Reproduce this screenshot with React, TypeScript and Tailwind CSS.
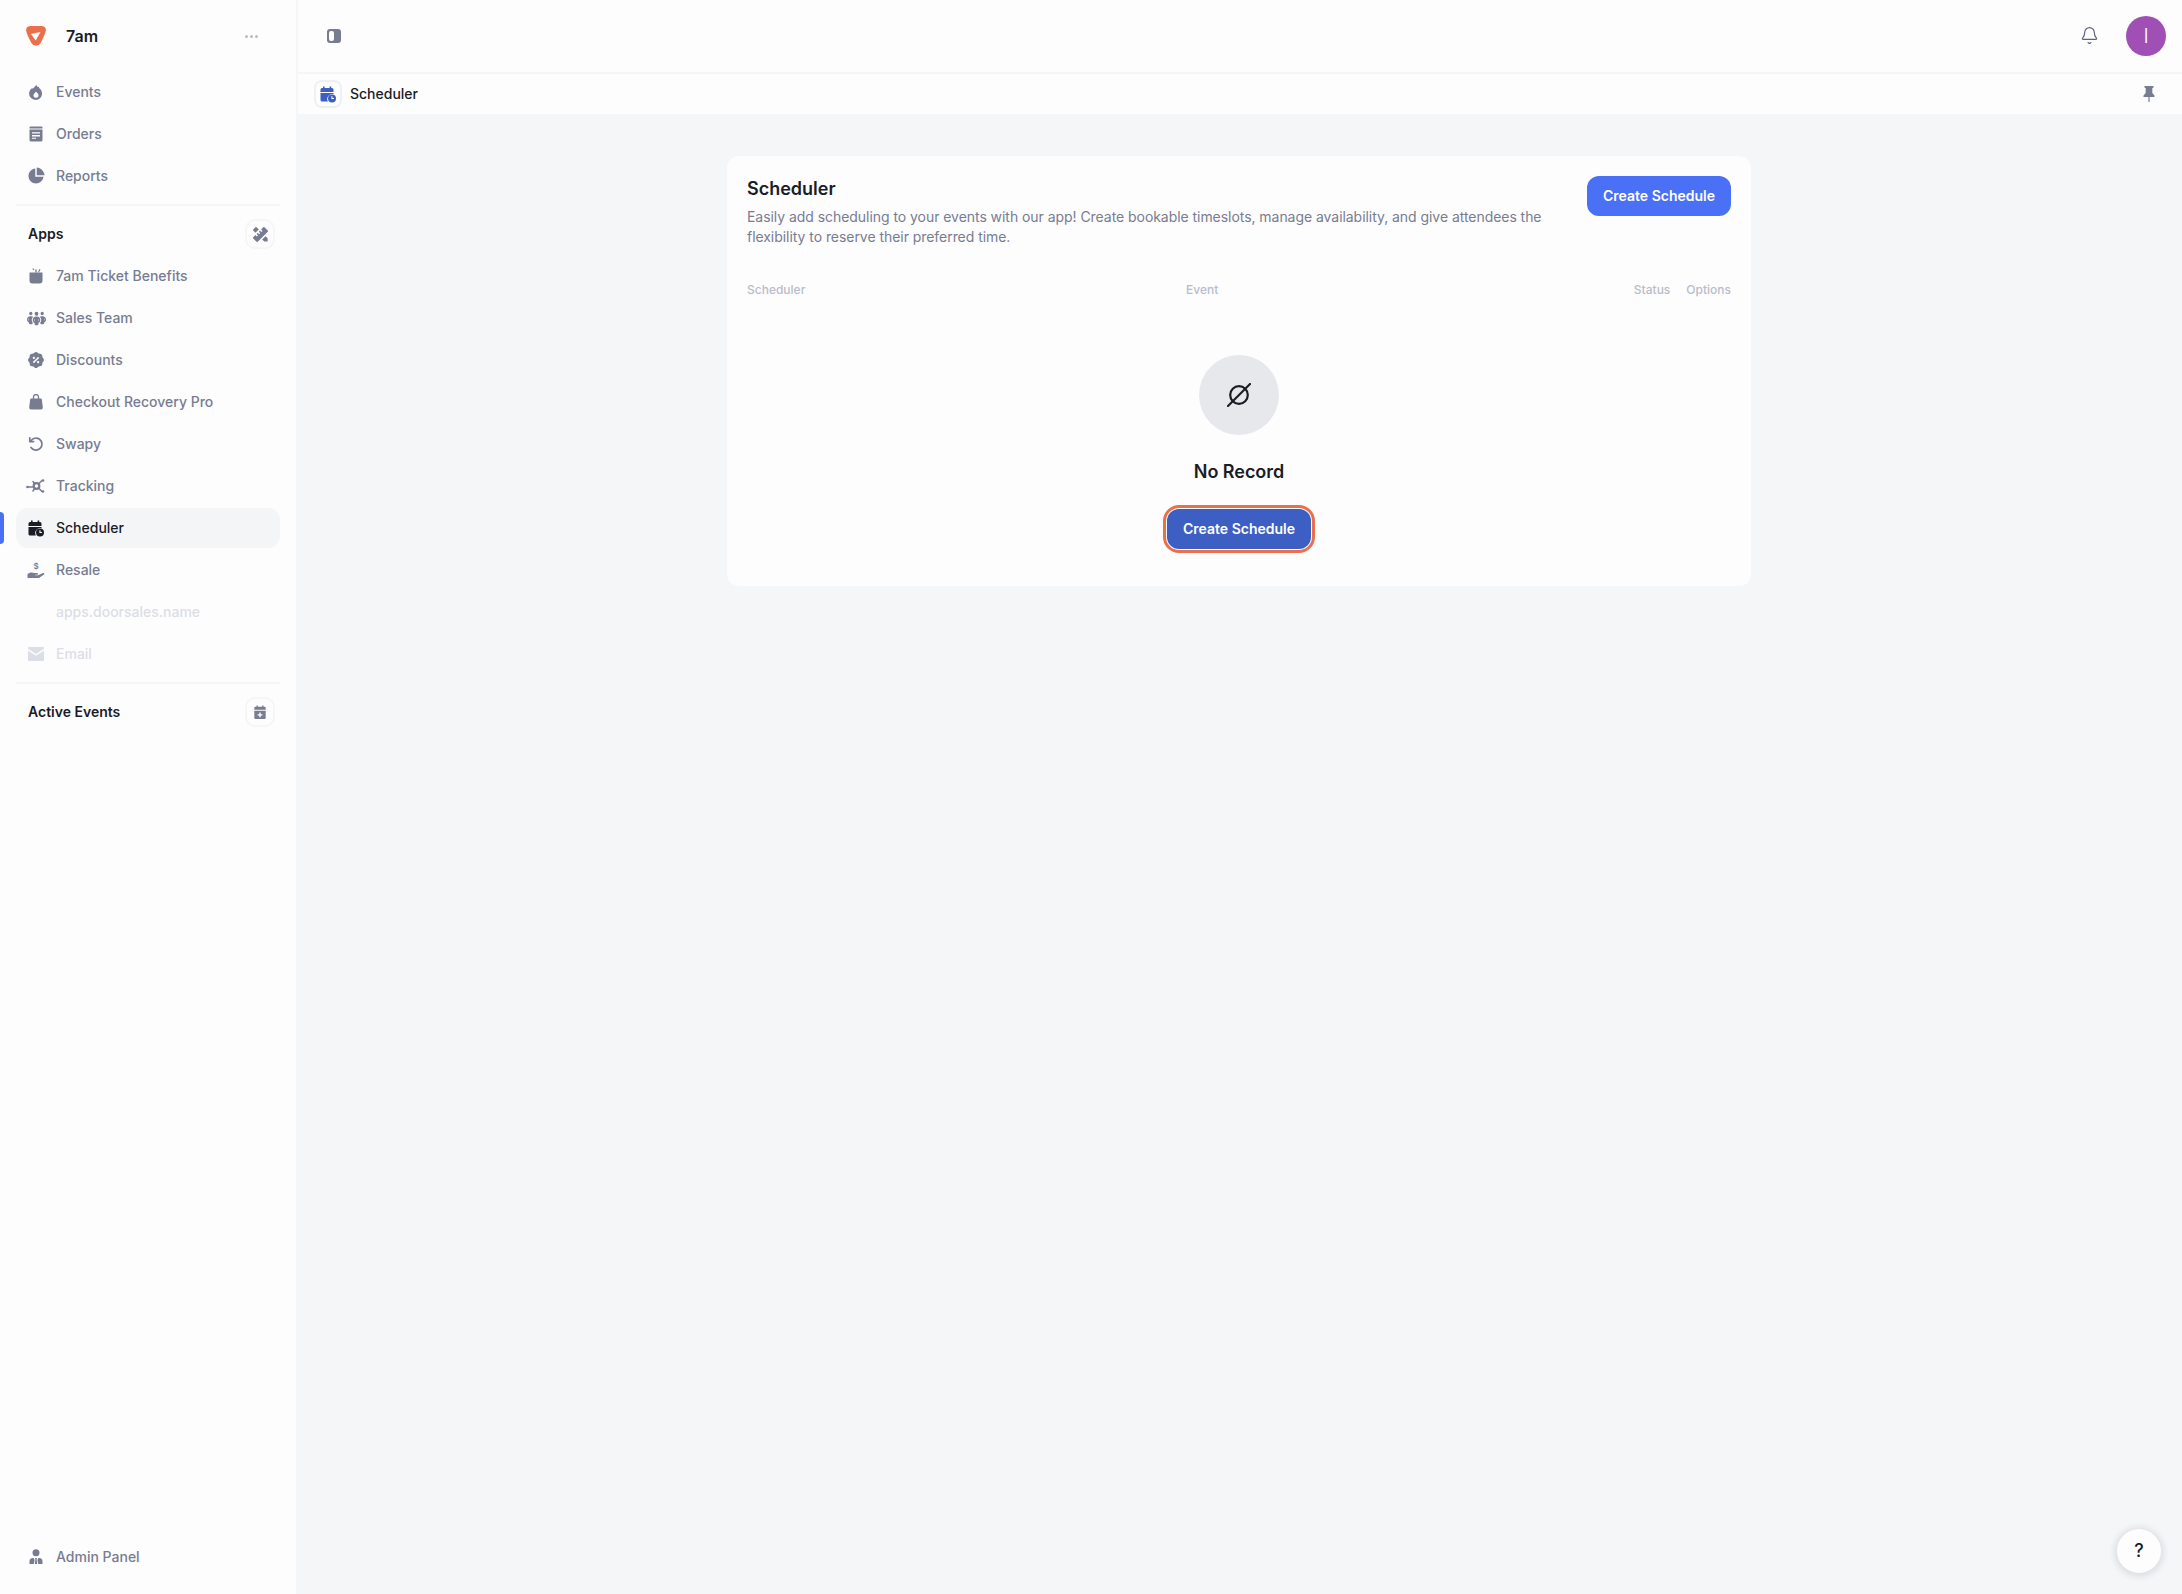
import type { ReactNode } from "react"
import { Bell } from "lucide-react"
import { RiDiscountPercentFill, RiPencilRuler2Fill, RiPieChart2Fill } from "react-icons/ri"
import { FaPeopleGroup } from "react-icons/fa6"

const font = { fontFamily: "Inter, 'Liberation Sans', sans-serif" }

function FlameIcon() {
  return (
    <svg viewBox="0 0 16 16" className="h-4 w-4" fill="currentColor">
      <path fillRule="evenodd" d="M8.200.5c.4 1.900 1.500 2.800 2.600 2.300.2.700.3 1 .4 1.300A6.500 6.500 0 1 1 3.800 4.200c.8.500 1.500.2 2-.5C6.800 3 7.700 1.800 8.200.5zM8 7.500c1 1.300 2.500 2 2.500 3.800a2.500 2.500 0 0 1-5 0C5.500 9.800 7 9 8 7.500z" />
    </svg>
  )
}

function OrdersIcon() {
  return (
    <svg viewBox="0 0 16 16" className="h-4 w-4" fill="currentColor">
      <path d="M2.500.5h11A1 1 0 0 1 14.500 1.500v1h-13v-1a1 1 0 0 1 1-1z" />
      <path fillRule="evenodd" d="M1.500 3.500h13v10.500a1.500 1.500 0 0 1-1.500 1.500H3A1.500 1.500 0 0 1 1.500 14zM4 6.200v1.300h8V6.200zm0 2.900v1.300h8V9.100zm0 2.700v1h4v-1z" />
    </svg>
  )
}

function GiftIcon() {
  return (
    <svg viewBox="0 0 16 16" className="h-4 w-4" fill="currentColor">
      <path d="M1.500 4.500h13v8a3 3 0 0 1-3 3h-7a3 3 0 0 1-3-3z" />
      <path d="M7.300 1.500h1.400v3H7.300zM4.400.8l1.100-.5.800 1.500-1.100.5zM11.500 1l1 .6-1.500 2.900-1-.6z" />
    </svg>
  )
}

function BagIcon() {
  return (
    <svg viewBox="0 0 16 16" className="h-4 w-4" fill="currentColor">
      <path d="M3.200 4.500h9.600a1 1 0 0 1 1 .8l1 8a2 2 0 0 1-2 2.200H3.200a2 2 0 0 1-2-2.200l1-8a1 1 0 0 1 1-.8z" />
      <path d="M5.500 5V3a2.500 2.500 0 0 1 5 0v2" fill="none" stroke="currentColor" strokeWidth="1.300" />
    </svg>
  )
}

function SwapyIcon() {
  return (
    <svg viewBox="0 0 16 16" className="h-4 w-4" fill="none" stroke="currentColor" strokeWidth="1.700" strokeLinecap="round" strokeLinejoin="round">
      <path d="M2.600 5.400A6 6 0 1 1 3 11.500" />
      <path d="M1.800 1.800v3.800h3.800" />
    </svg>
  )
}

function TrackingIcon() {
  return (
    <svg viewBox="0 0 20 16" className="h-4 w-5" fill="none" stroke="currentColor" strokeWidth="1.500" strokeLinecap="round">
      <circle cx="10.500" cy="8" r="2.800" strokeWidth="2.200" />
      <path d="M1.500 9H7.500M13 5.500l3-3M13 10.500l3 3M8.500 5.500L7 3.500M8.500 10.500l-1.500 2.500" />
      <circle cx="17" cy="2.500" r="1.300" fill="currentColor" stroke="none" />
      <circle cx="17" cy="13.500" r="1.300" fill="currentColor" stroke="none" />
      <circle cx="1.500" cy="9" r="1.300" fill="currentColor" stroke="none" />
    </svg>
  )
}

function CalendarClockIcon({ className = "h-[17px] w-[18px]" }: { className?: string }) {
  return (
    <svg viewBox="0 0 18 17" className={className} fill="currentColor">
      <path d="M4 0.500h1.600V2h5V0.500h1.600V2h.8a1.500 1.500 0 0 1 1.500 1.500V6H1.500V3.500A1.500 1.500 0 0 1 3 2h1z" />
      <path d="M1.500 7h13v1.200a5 5 0 0 0-5.600 7.300H3a1.500 1.500 0 0 1-1.500-1.500z" />
      <path fillRule="evenodd" d="M13 8.500a4 4 0 1 1 0 8 4 4 0 0 1 0-8zm-.6 1.800v2.700h2.600v-1.100h-1.500v-1.600z" />
    </svg>
  )
}

function ResaleIcon() {
  return (
    <svg viewBox="0 0 18 18" className="h-[18px] w-[18px]" fill="currentColor">
      <text x="9" y="7.500" textAnchor="middle" fontSize="8" fontWeight="600" fontFamily="Inter, sans-serif">$</text>
      <path d="M.500 17v-4c2-1.700 4.500-2 6.500-1h3.200c1 0 1 1.700 0 1.700H8v.5h3l5-2.200c1.200-.5 1.900.8 1 1.500l-5 3.500z" />
    </svg>
  )
}

function MailIcon() {
  return (
    <svg viewBox="0 0 16 14" className="h-[14px] w-4" fill="currentColor">
      <path d="M0 1a1 1 0 0 1 1-1h14a1 1 0 0 1 1 1v.8L8 7 0 1.800z" />
      <path d="M0 3.500 8 8.700l8-5.200V13a1 1 0 0 1-1 1H1a1 1 0 0 1-1-1z" />
    </svg>
  )
}

function CalendarPlusIcon() {
  return (
    <svg viewBox="0 0 16 16" className="h-[14px] w-[14px]" fill="currentColor">
      <path d="M4 .500h1.500V2h5V.500H12V2h1a1.500 1.500 0 0 1 1.500 1.500V5.500h-13V3.500A1.500 1.500 0 0 1 3 2h1z" />
      <path fillRule="evenodd" d="M1.500 6.500h13v8a1.500 1.500 0 0 1-1.500 1.500H3a1.500 1.500 0 0 1-1.500-1.500zM7.200 8.500v2H5.200v1.500h2v2h1.600v-2h2v-1.500h-2v-2z" />
    </svg>
  )
}

function AdminIcon() {
  return (
    <svg viewBox="0 0 16 16" className="h-4 w-4" fill="currentColor">
      <circle cx="8" cy="3.800" r="3.500" />
      <path d="M1.500 15v-2.400A3.500 3.500 0 0 1 5 9h.6l1 2-.8 4zM14.500 15v-2.400A3.500 3.500 0 0 0 11 9h-.6l-1 2 .8 4zM7 9h2l-.4 1.500.6 4.500H6.800l.6-4.500z" />
    </svg>
  )
}

function NavRow({ icon, label, active, muted }: { icon?: ReactNode; label: string; active?: boolean; muted?: boolean }) {
  const color = active ? "text-[#1a1c26] bg-[#f4f5f7]" : muted ? "text-[#dcdee5]" : "text-[#787c91]"
  return (
    <div className={`relative flex h-10 items-center gap-[10px] rounded-xl pl-[10px] text-sm font-medium ${color}`}>
      {active && <span className="absolute -left-4 top-1 h-8 w-1 rounded-r bg-[#4970f5]" />}
      <span className="flex h-5 w-5 items-center justify-center">{icon}</span>
      <span>{label}</span>
    </div>
  )
}

function SectionHead({ title, icon }: { title: string; icon: ReactNode }) {
  return (
    <div className="mt-[13px] flex h-[30px] items-center justify-between pl-3 pr-[5px]">
      <span className="text-sm font-semibold text-[#1a1c26]">{title}</span>
      <span className="flex h-[30px] w-[30px] items-center justify-center rounded-[10px] border-2 border-[#f5f6f8] text-[#787c91]">{icon}</span>
    </div>
  )
}

const apps: { label: string; icon?: ReactNode; active?: boolean; muted?: boolean }[] = [
  { label: "7am Ticket Benefits", icon: <GiftIcon /> },
  { label: "Sales Team", icon: <FaPeopleGroup size={19} /> },
  { label: "Discounts", icon: <RiDiscountPercentFill size={18} /> },
  { label: "Checkout Recovery Pro", icon: <BagIcon /> },
  { label: "Swapy", icon: <SwapyIcon /> },
  { label: "Tracking", icon: <TrackingIcon /> },
  { label: "Scheduler", icon: <CalendarClockIcon />, active: true },
  { label: "Resale", icon: <ResaleIcon /> },
  { label: "apps.doorsales.name", muted: true },
  { label: "Email", icon: <MailIcon />, muted: true },
]

function Sidebar() {
  return (
    <aside className="flex h-full w-[298px] shrink-0 flex-col border-r-2 border-[#f5f6f8] bg-[#fdfdfe] px-4">
      <div className="flex h-[72px] shrink-0 items-center pl-[10px] pr-[22px]">
        <svg viewBox="0 0 20 20" className="h-5 w-5" fill="#e9704a">
          <path fillRule="evenodd" d="M4 0h12a4 4 0 0 1 3.800 5c-1.200 4-3 8-5.300 12a5 5 0 0 1-9 0C3.200 13 1.200 9 .2 5A4 4 0 0 1 4 0zm1 8 4.700 6.500L14.500 6z" />
        </svg>
        <span className="ml-5 text-base font-semibold text-[#1a1c26]">7am</span>
        <span className="ml-auto flex gap-[2px]">
          <i className="h-[3px] w-[3px] rounded-full bg-[#b9bcca]" />
          <i className="h-[3px] w-[3px] rounded-full bg-[#b9bcca]" />
          <i className="h-[3px] w-[3px] rounded-full bg-[#b9bcca]" />
        </span>
      </div>
      <div className="flex flex-col gap-[2px]">
        <NavRow label="Events" icon={<FlameIcon />} />
        <NavRow label="Orders" icon={<OrdersIcon />} />
        <NavRow label="Reports" icon={<RiPieChart2Fill size={18} />} />
      </div>
      <div className="mt-2 h-[2px] bg-[#f5f6f8]" />
      <SectionHead title="Apps" icon={<RiPencilRuler2Fill size={19} />} />
      <div className="mt-[7px] flex flex-col gap-[2px]">
        {apps.map(a => (
          <NavRow key={a.label} {...a} />
        ))}
      </div>
      <div className="mt-2 h-[2px] bg-[#f5f6f8]" />
      <SectionHead title="Active Events" icon={<CalendarPlusIcon />} />
      <div className="mb-[17px] mt-auto">
        <NavRow label="Admin Panel" icon={<AdminIcon />} />
      </div>
    </aside>
  )
}

function Content() {
  return (
    <main className="relative flex min-w-0 flex-1 flex-col bg-[#f5f6f8]">
      <header className="flex h-[74px] shrink-0 items-center border-b-2 border-[#f5f6f8] bg-[#fdfdfe] pl-[29px] pr-4">
        <svg viewBox="0 0 14 14" className="h-[14px] w-[14px]">
          <rect width="14" height="14" rx="3" fill="#787c91" />
          <rect x="2" y="2" width="5" height="10" rx="2" fill="#fdfdfe" />
        </svg>
        <Bell size={19} strokeWidth={1.5} className="ml-auto -translate-y-px text-[#5f6378]" />
        <div className="ml-[27px] flex h-10 w-10 items-center justify-center rounded-full bg-[#a04fb5] text-xl font-light text-white">I</div>
      </header>
      <div className="flex h-10 shrink-0 items-center bg-[#fdfdfe] pl-4 pr-[27px]">
        <span className="flex h-7 w-7 items-center justify-center rounded-lg border-2 border-[#eef0f4] text-[#3d5fc4]">
          <CalendarClockIcon className="h-[17px] w-[18px]" />
        </span>
        <span className="ml-2 text-sm font-medium text-[#1a1c26]">Scheduler</span>
        <svg viewBox="0 0 12 16" className="ml-auto h-4 w-3 text-[#787c91]" fill="currentColor">
          <path d="M1.500 0h9v1.500L9.300 2.200v4.800l2.200 2.500V11H.500V9.500L2.700 7V2.200L1.500 1.500z" />
          <rect x="5.400" y="11" width="1.200" height="5" />
        </svg>
      </div>
      <div className="ml-[429px] mt-[42px] w-[1024px] rounded-xl bg-[#fdfdfe] px-5 pb-[37px] pt-5">
        <div className="flex items-start justify-between">
          <div>
            <h1 className="mt-px text-lg font-semibold leading-6 text-[#1a1c26]">Scheduler</h1>
            <p className="mt-[6px] max-w-[820px] text-sm tracking-[-0.05px] text-[#787c91]">
              Easily add scheduling to your events with our app! Create bookable timeslots, manage availability, and give attendees the flexibility to reserve their preferred time.
            </p>
          </div>
          <button className="h-10 w-[144px] shrink-0 rounded-xl bg-[#4970f5] text-sm font-semibold text-white">Create Schedule</button>
        </div>
        <div className="mt-[35px] flex text-xs font-medium leading-4 text-[#b9bcca]">
          <span className="w-[439px]">Scheduler</span>
          <span className="flex-1">Event</span>
          <span className="mr-4">Status</span>
          <span>Options</span>
        </div>
        <div className="mt-[57px] flex flex-col items-center">
          <div className="flex h-20 w-20 items-center justify-center rounded-full bg-[#e7e8ec] text-[#1a1c26]">
            <svg viewBox="0 0 24 24" className="h-6 w-6" fill="none" stroke="currentColor" strokeWidth="2.200" strokeLinecap="round">
              <circle cx="12" cy="12" r="8.800" />
              <path d="M1 23 23 1" />
            </svg>
          </div>
          <p className="mt-[23px] text-lg font-semibold leading-7 tracking-[-0.05px] text-[#1a1c26]">No Record</p>
          <button className="mt-[23px] h-10 w-[144px] rounded-xl bg-[#3d5fc4] text-sm font-semibold text-white outline-[3px] outline-offset-[1px] outline-[#e9704a]">
            Create Schedule
          </button>
        </div>
      </div>
      <button className="absolute bottom-[21px] right-[21px] flex h-11 w-11 items-center justify-center rounded-full bg-[#fdfdfe] text-lg font-medium text-[#1a1c26] shadow-[0_1px_6px_3px_rgba(20,25,40,0.1)]">
        ?
      </button>
    </main>
  )
}

export default function App() {
  return (
    <div className="flex h-screen w-full overflow-hidden" style={font}>
      <Sidebar />
      <Content />
    </div>
  )
}
